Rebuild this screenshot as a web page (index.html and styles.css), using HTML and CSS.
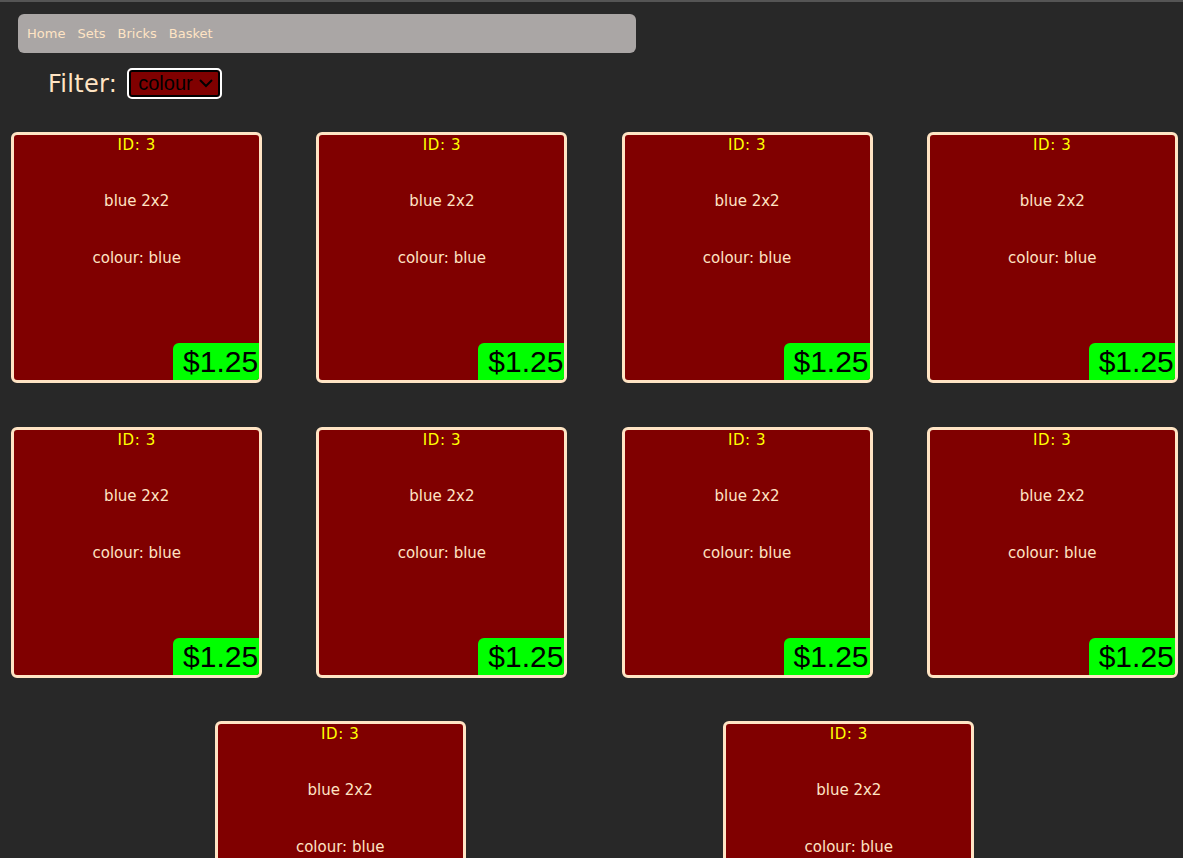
FILE: index.html
```html
<!DOCTYPE html>
<html lang="en">
<head>
<meta charset="utf-8">
<title>Bricks</title>
<link rel="stylesheet" href="styles.css">
</head>
<body>
<nav class="nav">
  <a href="#" class="nav-link">Home</a>
  <a href="#" class="nav-link">Sets</a>
  <a href="#" class="nav-link">Bricks</a>
  <a href="#" class="nav-link">Basket</a>
</nav>
<div class="filter">
  <label class="filter-label" for="f">Filter:</label>
  <span class="select-wrap">
    <select id="f" class="select"><option>colour</option></select>
    <svg class="chev" width="16" height="10" viewBox="0 0 16 10"><path d="M2 2 L8 8 L14 2" fill="none" stroke="#000" stroke-width="2"/></svg>
  </span>
</div>
<main class="grid">
  <div class="card"><div class="id">ID: 3</div><p class="name">blue 2x2</p><p class="colour">colour: blue</p><div class="price">$1.25</div></div>
  <div class="card"><div class="id">ID: 3</div><p class="name">blue 2x2</p><p class="colour">colour: blue</p><div class="price">$1.25</div></div>
  <div class="card"><div class="id">ID: 3</div><p class="name">blue 2x2</p><p class="colour">colour: blue</p><div class="price">$1.25</div></div>
  <div class="card"><div class="id">ID: 3</div><p class="name">blue 2x2</p><p class="colour">colour: blue</p><div class="price">$1.25</div></div>
  <div class="card"><div class="id">ID: 3</div><p class="name">blue 2x2</p><p class="colour">colour: blue</p><div class="price">$1.25</div></div>
  <div class="card"><div class="id">ID: 3</div><p class="name">blue 2x2</p><p class="colour">colour: blue</p><div class="price">$1.25</div></div>
  <div class="card"><div class="id">ID: 3</div><p class="name">blue 2x2</p><p class="colour">colour: blue</p><div class="price">$1.25</div></div>
  <div class="card"><div class="id">ID: 3</div><p class="name">blue 2x2</p><p class="colour">colour: blue</p><div class="price">$1.25</div></div>
  <div class="card"><div class="id">ID: 3</div><p class="name">blue 2x2</p><p class="colour">colour: blue</p><div class="price">$1.25</div></div>
  <div class="card"><div class="id">ID: 3</div><p class="name">blue 2x2</p><p class="colour">colour: blue</p><div class="price">$1.25</div></div>
</main>
</body>
</html>
```
FILE: styles.css
```css
html {
  background: #282828;
  border-top: 2px solid #555555;
  overflow-x: hidden;
  scrollbar-width: none;
}
body {
  margin: 0;
  padding: 12px 0 0 0;
  font-family: "DejaVu Sans", Verdana, sans-serif;
  overflow-x: hidden;
}
.nav {
  margin-left: 18px;
  width: 618px;
  height: 39px;
  box-sizing: border-box;
  padding-left: 9px;
  background: #aaa6a5;
  border-radius: 6px;
  display: flex;
  align-items: center;
  gap: 12px;
}
.nav-link {
  color: #ffe4c4;
  text-decoration: none;
  font-size: 13px;
}
.filter {
  margin-top: 15px;
  padding-left: 48px;
  display: flex;
  align-items: center;
  gap: 10px;
  height: 31px;
}
.filter-label {
  color: #ffe4c4;
  font-size: 24px;
  letter-spacing: 0.3px;
}
.select-wrap {
  position: relative;
  display: inline-block;
}
.select {
  appearance: none;
  -webkit-appearance: none;
  width: 95px;
  height: 31px;
  box-sizing: border-box;
  margin: 0;
  padding: 0 0 0 9px;
  background: #800000;
  border: 2px solid #ffffff;
  border-radius: 5px;
  box-shadow: inset 0 0 0 2px #000;
  color: #000;
  font-family: "Liberation Sans", Arial, sans-serif;
  font-size: 20px;
  line-height: 27px;
}
.chev {
  position: absolute;
  right: 8px;
  top: 10px;
  pointer-events: none;
}
.grid {
  margin: 33px 0 0 -33px;
  width: 1255px;
  display: flex;
  flex-wrap: wrap;
  justify-content: space-evenly;
  row-gap: 43.5px;
}
.card {
  position: relative;
  width: 251px;
  height: 251px;
  box-sizing: border-box;
  padding-top: 1px;
  margin: 0 10px;
  background: #800000;
  border: 3px solid #ffe4c4;
  border-radius: 6px;
  text-align: center;
  font-size: 15px;
  line-height: 18px;
  color: #ffe4c4;
  overflow: hidden;
}
.id {
  color: #ffff00;
  letter-spacing: 0.6px;
}
.name {
  margin: 38px 0 0 0;
}
.colour {
  margin: 39px 0 0 0;
}
.price {
  position: absolute;
  right: 0;
  bottom: 0;
  width: 86px;
  height: 37px;
  box-sizing: border-box;
  padding-right: 1px;
  background: #00ff00;
  border-top-left-radius: 6px;
  color: #000;
  font-family: "Liberation Sans", Arial, sans-serif;
  font-size: 30px;
  line-height: 37px;
  text-align: right;
}
```
